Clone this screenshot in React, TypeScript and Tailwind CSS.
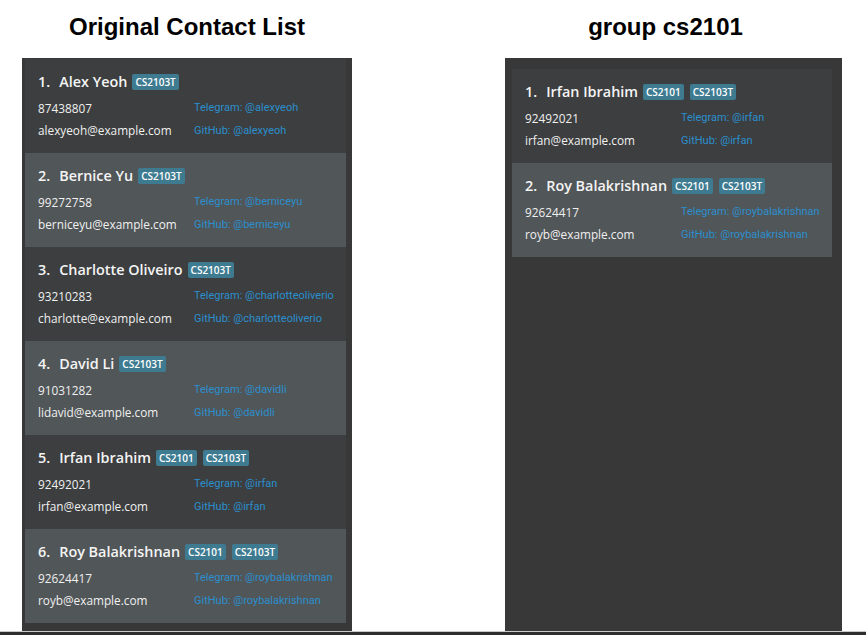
type Person = {
  name: string;
  phone: string;
  email: string;
  handle: string;
  tags: string[];
};

const everyone: Person[] = [
  { name: "Alex Yeoh", phone: "87438807", email: "alexyeoh@example.com", handle: "alexyeoh", tags: ["CS2103T"] },
  { name: "Bernice Yu", phone: "99272758", email: "berniceyu@example.com", handle: "berniceyu", tags: ["CS2103T"] },
  { name: "Charlotte Oliveiro", phone: "93210283", email: "charlotte@example.com", handle: "charlotteoliverio", tags: ["CS2103T"] },
  { name: "David Li", phone: "91031282", email: "lidavid@example.com", handle: "davidli", tags: ["CS2103T"] },
  { name: "Irfan Ibrahim", phone: "92492021", email: "irfan@example.com", handle: "irfan", tags: ["CS2101", "CS2103T"] },
  { name: "Roy Balakrishnan", phone: "92624417", email: "royb@example.com", handle: "roybalakrishnan", tags: ["CS2101", "CS2103T"] },
];

const group = everyone.filter((p) => p.tags.includes("CS2101"));

const PersonCard = ({ person, index }: { person: Person; index: number }) => {
  const even = index % 2 === 1;
  return (
    <div
      className={`h-[94px] pl-[13px] pt-[13px] ${even ? "bg-[#515658]" : "bg-[#3c3e3f]"}`}
    >
      <div className="flex h-[20px] items-center text-[14.4px] font-semibold text-[#f4f4f4]">
        <span>{index + 1}.</span>
        <span className="ml-[9px] whitespace-nowrap">{person.name}</span>
        <div className="ml-[5px] flex gap-[6px]">
          {person.tags.map((t) => (
            <span
              key={t}
              className="rounded-[2px] bg-[#3e7b91] px-[3px] text-[10px] font-semibold leading-[16px] text-white"
            >
              {t}
            </span>
          ))}
        </div>
      </div>
      <div className="mt-[5px] grid grid-cols-[156px_1fr]">
        <div className="flex h-[23px] items-center text-[11.8px] text-[#f0f0f0]">{person.phone}</div>
        <div className="flex h-[23px] items-center whitespace-nowrap font-['Roboto',sans-serif] text-[11px] text-[#2b8fce]">
          Telegram: @{person.handle}
        </div>
        <div className="flex h-[22px] items-center text-[11.8px] text-[#f0f0f0]">{person.email}</div>
        <div className="flex h-[22px] items-center whitespace-nowrap font-['Roboto',sans-serif] text-[11px] text-[#2b8fce]">
          GitHub: @{person.handle}
        </div>
      </div>
    </div>
  );
};

export default function App() {
  return (
    <div className="flex h-[635px] w-[866px] flex-col overflow-hidden bg-white font-['Open_Sans',sans-serif]">
      <div className="flex flex-1 pl-[22px]">
        <div className="flex w-[330px] flex-col">
          <h1 className="flex h-[58px] items-center justify-center pb-[4px] font-['Liberation_Sans',Arial,sans-serif] text-[24px] font-bold text-black">
            Original Contact List
          </h1>
          <div className="flex-1 bg-[#383838] pl-[3px] pr-[6px] pt-[1px]">
            {everyone.map((p, i) => (
              <PersonCard key={p.name} person={p} index={i} />
            ))}
          </div>
        </div>
        <div className="w-[153px]" />
        <div className="flex w-[337px] flex-col">
          <h1 className="flex h-[58px] items-center justify-center pb-[4px] pr-[16px] font-['Liberation_Sans',Arial,sans-serif] text-[24px] font-bold text-black">
            group cs2101
          </h1>
          <div className="flex-1 bg-[#383838] pl-[7px] pr-[10px] pt-[11px]">
            {group.map((p, i) => (
              <PersonCard key={p.name} person={p} index={i} />
            ))}
          </div>
        </div>
      </div>
      <div className="h-[1px] bg-[#c8c8c8]" />
      <div className="h-[3px] bg-[#2e2e2e]" />
    </div>
  );
}
